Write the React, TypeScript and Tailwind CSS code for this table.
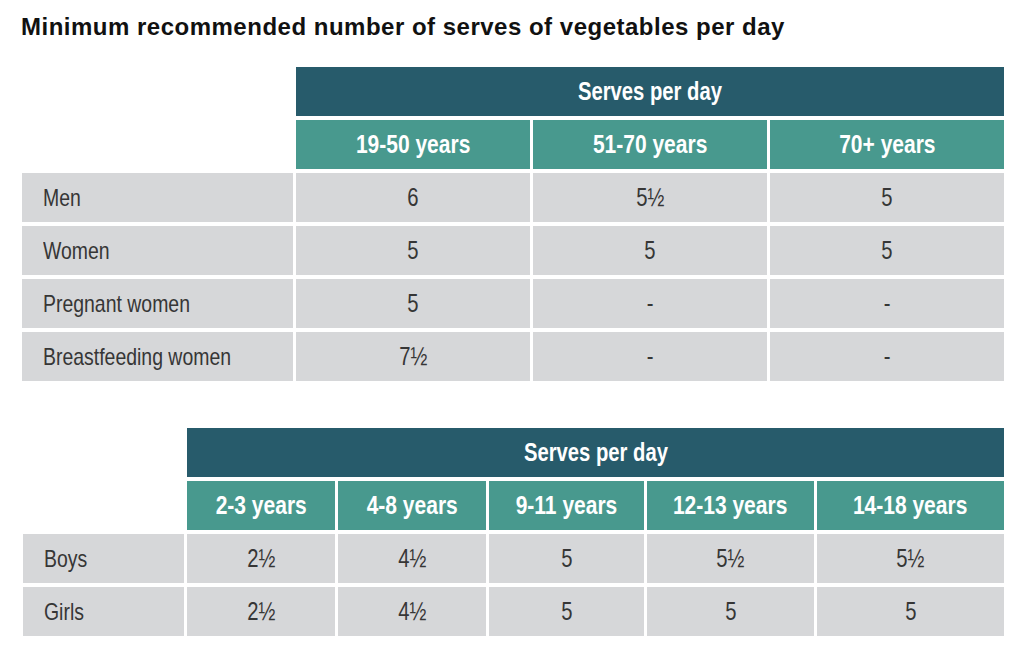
const sans = "font-['Liberation_Sans',Arial,sans-serif]";

type Table = {
  cols: string;
  ml: string;
  ages: string[];
  rows: { label: string; values: string[] }[];
};

const adults: Table = {
  cols: 'grid-cols-[271px_234px_234px_234px]',
  ml: 'ml-[22px]',
  ages: ['19-50 years', '51-70 years', '70+ years'],
  rows: [
    { label: 'Men', values: ['6', '5½', '5'] },
    { label: 'Women', values: ['5', '5', '5'] },
    { label: 'Pregnant women', values: ['5', '-', '-'] },
    { label: 'Breastfeeding women', values: ['7½', '-', '-'] },
  ],
};

const children: Table = {
  cols: 'grid-cols-[161px_148px_148px_155px_167px_187px]',
  ml: 'ml-[23px]',
  ages: ['2-3 years', '4-8 years', '9-11 years', '12-13 years', '14-18 years'],
  rows: [
    { label: 'Boys', values: ['2½', '4½', '5', '5½', '5½'] },
    { label: 'Girls', values: ['2½', '4½', '5', '5', '5'] },
  ],
};

// condensed look: Helvetica-like face squeezed horizontally
function Narrow({ children, left, wide }: { children: React.ReactNode; left?: boolean; wide?: boolean }) {
  return (
    <span
      className={`inline-block whitespace-nowrap ${wide ? 'scale-x-[0.84]' : 'scale-x-[0.81]'} ${
        left ? 'origin-left' : 'origin-center'
      }`}
    >
      {children}
    </span>
  );
}

function ServesTable({ table, className }: { table: Table; className: string }) {
  const span = table.ages.length === 3 ? 'col-span-3' : 'col-span-5';
  return (
    <div className={`grid ${table.cols} auto-rows-[49px] gap-x-[3px] gap-y-[4px] ${table.ml} ${className} ${sans}`}>
      <div />
      <div className={`${span} bg-[#275b6b] flex items-center justify-center text-white font-bold text-[25px]`}>
        <Narrow>Serves per day</Narrow>
      </div>
      <div />
      {table.ages.map((a) => (
        <div key={a} className="bg-[#48998e] flex items-center justify-center text-white font-bold text-[25px]">
          <Narrow wide>{a}</Narrow>
        </div>
      ))}
      {table.rows.map((r) => (
        <div key={r.label} className="contents">
          <div className="bg-[#d6d7d9] flex items-center pl-[21px] text-[#363636] text-[24px]">
            <Narrow left>{r.label}</Narrow>
          </div>
          {r.values.map((v, i) => (
            <div key={i} className="bg-[#d6d7d9] flex items-center justify-center text-[#363636] text-[25px]">
              <Narrow>{v}</Narrow>
            </div>
          ))}
        </div>
      ))}
    </div>
  );
}

export default function App() {
  return (
    <div className="w-[1024px] h-[658px] bg-white overflow-hidden">
      <h1 className={`pt-[13px] pl-[21px] leading-[28px] text-[24px] tracking-[0.5px] font-bold text-[#111111] ${sans}`}>
        Minimum recommended number of serves of vegetables per day
      </h1>
      <ServesTable table={adults} className="mt-[26px]" />
      <ServesTable table={children} className="mt-[47px]" />
    </div>
  );
}
